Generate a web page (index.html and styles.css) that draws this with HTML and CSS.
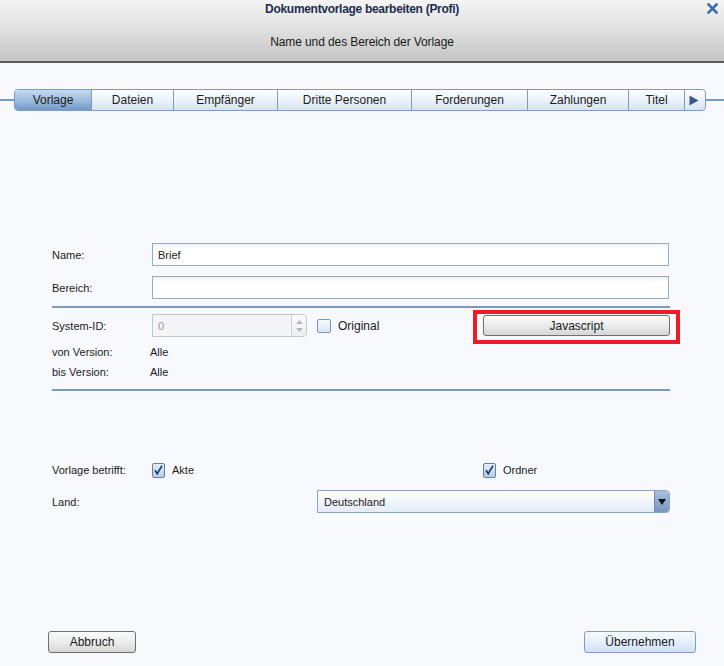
FILE: index.html
```html
<!DOCTYPE html>
<html lang="de">
<head>
<meta charset="utf-8">
<title>Dokumentvorlage bearbeiten (Profi)</title>
<link rel="stylesheet" href="styles.css">
</head>
<body>
<div class="dialog">
  <header class="head">
    <div class="title">Dokumentvorlage bearbeiten (Profi)</div>
    <svg class="close" width="11" height="11" viewBox="0 0 11 11"><path d="M1.5 1.5 L9.5 9.5 M9.5 1.5 L1.5 9.5" stroke="#3b6eaf" stroke-width="2.6" stroke-linecap="square"/></svg>
    <div class="subtitle">Name und des Bereich der Vorlage</div>
  </header>

  <nav class="tabrow">
    <span class="tabline"></span>
    <div class="tabs">
      <div class="tab active w1">Vorlage</div>
      <div class="tab w2">Dateien</div>
      <div class="tab w3">Empfänger</div>
      <div class="tab w4">Dritte Personen</div>
      <div class="tab w5">Forderungen</div>
      <div class="tab w6">Zahlungen</div>
      <div class="tab w7">Titel</div>
      <div class="tab w8"><svg width="10" height="11" viewBox="0 0 10 11"><path d="M0.5 0.5 L9.5 5.5 L0.5 10.5 Z" fill="#34598a"/></svg></div>
    </div>
    <span class="tabline grow"></span>
  </nav>

  <main class="form">
    <div class="row r-name">
      <label class="lbl">Name:</label>
      <div class="input">Brief</div>
    </div>
    <div class="row r-bereich">
      <label class="lbl">Bereich:</label>
      <div class="input"></div>
    </div>
    <div class="sep s1"></div>
    <div class="row r-sys">
      <label class="lbl">System-ID:</label>
      <div class="spinner">
        <span class="spin-val">0</span>
        <span class="spin-btns">
          <svg width="7" height="4" viewBox="0 0 7 4"><path d="M0 4 L3.5 0 L7 4 Z" fill="#b4b8bd"/></svg>
          <svg width="7" height="4" viewBox="0 0 7 4"><path d="M0 0 L3.5 4 L7 0 Z" fill="#b4b8bd"/></svg>
        </span>
      </div>
      <span class="check"></span>
      <span class="chk-text">Original</span>
      <div class="js-wrap">
        <button class="btn btn-js">Javascript</button>
        <span class="mark"></span>
      </div>
    </div>
    <div class="row info r-von">
      <span class="lbl">von Version:</span><span class="val">Alle</span>
    </div>
    <div class="row info">
      <span class="lbl">bis Version:</span><span class="val">Alle</span>
    </div>
    <div class="sep s2"></div>

    <div class="row info r-betrifft">
      <span class="lbl">Vorlage betrifft:</span>
      <span class="check checked"><svg width="12" height="12" viewBox="0 0 12 12"><path d="M2.2 6.3 L4.6 10 L9.8 1.2" fill="none" stroke="#183863" stroke-width="1.8"/></svg></span>
      <span class="chk-small">Akte</span>
      <span class="check checked ordner"><svg width="12" height="12" viewBox="0 0 12 12"><path d="M2.2 6.3 L4.6 10 L9.8 1.2" fill="none" stroke="#183863" stroke-width="1.8"/></svg></span>
      <span class="chk-small">Ordner</span>
    </div>
    <div class="row r-land">
      <span class="lbl">Land:</span>
      <div class="select">
        <span class="sel-val">Deutschland</span>
        <span class="sel-arrow"><svg width="8" height="6" viewBox="0 0 8 6"><path d="M0 0 L8 0 L4 6 Z" fill="#111"/></svg></span>
      </div>
    </div>
  </main>

  <footer class="foot">
    <button class="btn btn-cancel">Abbruch</button>
    <button class="btn btn-ok">Übernehmen</button>
  </footer>
</div>
</body>
</html>
```

FILE: styles.css
```css
* { box-sizing: border-box; }
html, body { margin: 0; padding: 0; }
body {
  width: 724px;
  height: 666px;
  overflow: hidden;
  background: #f7f9fd;
  font-family: "Liberation Sans", Arial, sans-serif;
  color: #1b1b1b;
}
.dialog { display: flex; flex-direction: column; height: 666px; }

.head {
  position: relative;
  height: 63px;
  background: linear-gradient(#f4f4f4 0%, #e2e2e2 45%, #c4c4c4 100%);
  border-bottom: 2px solid #5a5a5a;
  display: flex;
  flex-direction: column;
  align-items: center;
}
.title {
  margin-top: 2px;
  font-size: 12px;
  font-weight: bold;
  color: #1c2c4e;
  letter-spacing: -0.3px;
}
.subtitle {
  margin-top: 19px;
  font-size: 12px;
  color: #1b1b1b;
  letter-spacing: -0.1px;
}
.close { position: absolute; right: 6px; top: 3px; }

.tabrow {
  margin-top: 26px;
  display: flex;
  align-items: center;
  height: 22px;
}
.tabline { width: 14px; height: 2px; background: #7b9cc1; }
.tabline.grow { flex: 1; }
.tabs {
  display: flex;
  height: 22px;
  border: 1px solid #7a9bc4;
  border-radius: 4px;
  overflow: hidden;
  background: linear-gradient(#ffffff 0%, #eef4fb 45%, #d6e4f3 100%);
}
.tab {
  display: flex;
  align-items: center;
  justify-content: center;
  font-size: 12px;
  color: #1b1b1b;
  border-left: 1px solid #7a9bc4;
}
.tab:first-child { border-left: none; }
.tab.active {
  background: linear-gradient(#c6daf0 0%, #a0bee0 50%, #7399c6 100%);
}
.w1 { width: 76px; }
.w2 { width: 82px; }
.w3 { width: 104px; }
.w4 { width: 134px; }
.w5 { width: 116px; }
.w6 { width: 101px; }
.w7 { width: 56px; }
.w8 { width: 21px; justify-content: flex-start; padding-left: 4px; }

.form {
  padding: 0 55px 0 52px;
  display: flex;
  flex-direction: column;
}
.row { display: flex; align-items: center; height: 23px; }
.row.info { height: 20px; }
.lbl { width: 100px; flex: none; font-size: 11px; color: #1b1b1b; }
.val { font-size: 11px; margin-left: -2px; }
.r-name { margin-top: 132px; }
.r-bereich { margin-top: 10px; }
.r-sys { margin-top: 6px; }
.r-von { margin-top: 5px; }
.r-betrifft { margin-top: 69px; }
.r-land { margin-top: 10px; }

.input {
  flex: 1;
  height: 23px;
  border: 1px solid #98abc0;
  background: linear-gradient(#eef1f5 0px, #ffffff 5px);
  font-size: 11px;
  padding-left: 5px;
  display: flex;
  align-items: center;
}

.sep { height: 2px; background: #7b9bb9; margin-right: -1px; }
.s1 { margin-top: 7px; }
.s2 { margin-top: 7px; }

.spinner {
  width: 155px;
  height: 23px;
  border: 1px solid #c2c8cf;
  border-radius: 0 4px 4px 0;
  background: #f4f5f7;
  display: flex;
  align-items: stretch;
}
.spin-val { flex: 1; font-size: 11px; color: #9a9a9a; padding-left: 5px; display: flex; align-items: center; }
.spin-btns {
  width: 15px;
  border-left: 1px solid #cdd2d8;
  display: flex;
  flex-direction: column;
  align-items: center;
  justify-content: center;
  gap: 4px;
  background: linear-gradient(#fbfbfc, #eceef1);
  border-radius: 0 4px 4px 0;
}

.check {
  width: 14px;
  height: 14px;
  border: 1px solid #7898c2;
  border-radius: 2px;
  background: linear-gradient(#f7faff, #dbe6f3);
  margin-left: 10px;
  flex: none;
  display: flex;
  align-items: center;
  justify-content: center;
}
.check.checked { margin-left: 0; width: 13px; height: 15px; border-color: #5e80ad; background: linear-gradient(#e6eefa, #b7cbe4); }
.check.ordner { margin-left: 289px; }
.chk-text { font-size: 12px; margin-left: 7px; }
.chk-small { font-size: 11px; margin-left: 7px; }

.js-wrap { position: relative; margin-left: auto; width: 187px; height: 21px; margin-right: -1px; }
.mark {
  position: absolute;
  left: -10px; right: -10px; top: -5px; bottom: -8px;
  border: 4px solid #ec1c24;
  pointer-events: none;
}

.btn {
  font-family: "Liberation Sans", Arial, sans-serif;
  font-size: 12px;
  color: #1b1b1b;
  border: 1px solid #6f6f6f;
  border-radius: 3px;
  background: linear-gradient(#fbfbfb 0%, #ececec 50%, #d6d6d6 100%);
  padding: 0;
  height: 22px;
}
.btn-js { width: 187px; height: 21px; }

.select {
  margin-left: 165px;
  flex: 1;
  height: 23px;
  border: 1px solid #8ba4c6;
  border-radius: 0 4px 4px 0;
  background: linear-gradient(#ffffff, #e4ecf7);
  display: flex;
  align-items: stretch;
  margin-right: -1px;
}
.sel-val { flex: 1; font-size: 11px; padding-left: 6px; display: flex; align-items: center; }
.sel-arrow {
  width: 15px;
  background: linear-gradient(#a9bfdc, #7896c0);
  border-left: 1px solid #6f8db6;
  display: flex;
  align-items: center;
  justify-content: center;
  border-radius: 0 3px 3px 0;
}

.foot {
  margin-top: 118px;
  display: flex;
  justify-content: space-between;
  padding: 0 28px 0 48px;
}
.btn-cancel { width: 88px; }
.btn-ok {
  width: 112px;
  border-color: #7d9dc6;
  background: linear-gradient(#f6faff 0%, #e6f0fb 50%, #cfe0f3 100%);
}
```
